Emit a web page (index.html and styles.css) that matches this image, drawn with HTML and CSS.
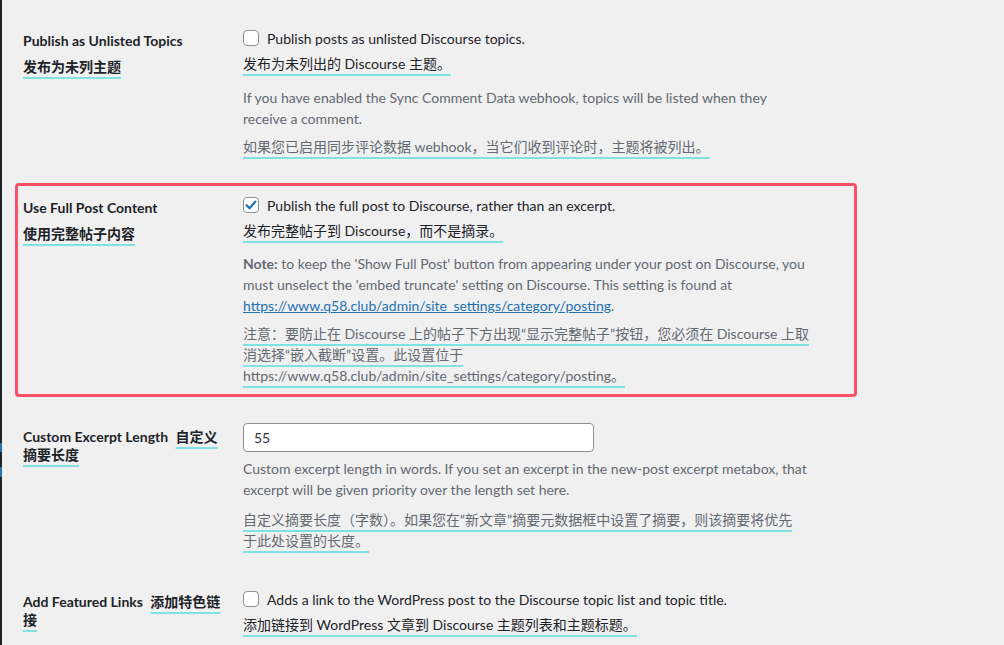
FILE: index.html
```html
<!DOCTYPE html>
<html lang="en">
<head>
  <meta charset="UTF-8" />
  <title>Discourse publishing settings</title>
  <link rel="stylesheet" href="styles.css">
</head>
<body>
  <div class="screen">
    <div class="menu-edge"></div>

    <div class="settings">
      <div class="row">
        <div class="th">
          <div>Publish as Unlisted Topics</div>
          <div class="th-tr"><span class="tr">发布为未列主题</span></div>
        </div>
        <div class="td">
          <label class="check"><span class="box"></span>Publish posts as unlisted Discourse topics.</label>
          <p class="tr-line"><span class="tr">发布为未列出的 Discourse 主题。</span></p>
          <p class="description">If you have enabled the Sync Comment Data webhook, topics will be listed when they receive a comment.</p>
          <p class="description tr-desc"><span class="tr">如果您已启用同步评论数据 webhook，当它们收到评论时，主题将被列出。</span></p>
        </div>
      </div>

      <div class="row highlight">
        <div class="th">
          <div>Use Full Post Content</div>
          <div class="th-tr"><span class="tr">使用完整帖子内容</span></div>
        </div>
        <div class="td">
          <label class="check"><span class="box checked"><svg viewBox="0 0 16 16" width="16" height="16"><path d="M3.6 8.2 L6.6 11.2 L12.4 4.6" fill="none" stroke="#2271b1" stroke-width="2.2" stroke-linecap="round" stroke-linejoin="round"/></svg></span>Publish the full post to Discourse, rather than an excerpt.</label>
          <p class="tr-line"><span class="tr">发布完整帖子到 Discourse，而不是摘录。</span></p>
          <p class="description note"><strong>Note:</strong> to keep the 'Show Full Post' button from appearing under your post on Discourse, you must unselect the 'embed truncate' setting on Discourse. This setting is found at <a href="#">https://www.q58.club/admin/site_settings/category/posting</a>.</p>
          <p class="description tr-desc"><span class="tr">注意：要防止在 Discourse 上的帖子下方出现“显示完整帖子”按钮，您必须在 Discourse 上取消选择“嵌入截断”设置。此设置位于 https://www.q58.club/admin/site_settings/category/posting。</span></p>
        </div>
      </div>

      <div class="row">
        <div class="th">Custom Excerpt Length <span class="tr th-inline">自定义摘要长度</span></div>
        <div class="td">
          <input class="text-input" type="text" value="55">
          <p class="description after-input">Custom excerpt length in words. If you set an excerpt in the new-post excerpt metabox, that excerpt will be given priority over the length set here.</p>
          <p class="description tr-desc tr-narrow"><span class="tr">自定义摘要长度（字数）。如果您在“新文章”摘要元数据框中设置了摘要，则该摘要将优先于此处设置的长度。</span></p>
        </div>
      </div>

      <div class="row">
        <div class="th">Add Featured Links <span class="tr th-inline">添加特色链接</span></div>
        <div class="td">
          <label class="check"><span class="box"></span>Adds a link to the WordPress post to the Discourse topic list and topic title.</label>
          <p class="tr-line"><span class="tr">添加链接到 WordPress 文章到 Discourse 主题列表和主题标题。</span></p>
        </div>
      </div>
    </div>
  </div>
</body>
</html>
```

FILE: styles.css
```css
* {
  box-sizing: border-box;
}

body {
  margin: 0;
  background: #f0f0f1;
  font-family: Lato, "Noto Sans CJK SC", sans-serif;
  font-size: 14px;
  color: #3c434a;
  overflow: hidden;
}

.screen {
  display: flex;
  min-height: 100vh;
}

/* edge of the admin menu, with the two highlighted items */
.menu-edge {
  width: 2px;
  flex-shrink: 0;
  background: linear-gradient(to bottom,
    #1d2327 443px, #2271b1 443px 452px,
    #1d2327 452px 467px, #2271b1 467px 477px,
    #1d2327 477px);
}

.settings {
  padding: 16px 0 0 13px;
}

.row {
  display: grid;
  grid-template-columns: 210px 1fr;
  width: 842px;
  padding-left: 5px;
  margin-bottom: 15px;
  border: 3px solid transparent;
  border-radius: 4px;
}

.row.highlight {
  border-color: #fd5066;
}

.th {
  padding: 13px 10px 8px 0;
  font-weight: 700;
  line-height: 18px;
  color: #1d2327;
}

.th-tr {
  margin-top: 8px;
}

.th-inline {
  margin-left: 4px;
}

.td {
  padding: 8px 0 8px 10px;
}

.tr {
  text-decoration: underline;
  text-decoration-color: #7fe1e4;
  text-decoration-thickness: 2px;
  text-underline-offset: 5px;
}

.check {
  display: flex;
  align-items: center;
  gap: 8px;
  height: 22px;
  color: #1d2327;
}

.box {
  width: 16px;
  height: 16px;
  flex-shrink: 0;
  background: #fff;
  border: 1px solid #8c8f94;
  border-radius: 4px;
  display: flex;
  align-items: center;
  justify-content: center;
}

.box svg {
  display: block;
  margin: -1px;
}

.tr-line {
  margin: 4px 0 0;
  line-height: 21px;
  color: #1d2327;
}

.description {
  max-width: 566px;
  margin: 13px 0 0;
  line-height: 21px;
  color: #646970;
}

.description.note {
  margin-top: 12px;
}

.description strong {
  font-weight: 700;
}

.description a {
  color: #2271b1;
}

.description.tr-desc {
  max-width: 571px;
  margin-top: 7px;
}

.description.tr-narrow {
  max-width: 556px;
  margin-top: 9px;
}

.description.after-input {
  margin-top: 6px;
}

.text-input {
  display: block;
  width: 351px;
  height: 29px;
  margin: 0;
  padding: 0 10px;
  font-family: Lato, sans-serif;
  font-size: 14px;
  color: #2c3338;
  background: #fff;
  border: 1px solid #8c8f94;
  border-radius: 4px;
}
```
